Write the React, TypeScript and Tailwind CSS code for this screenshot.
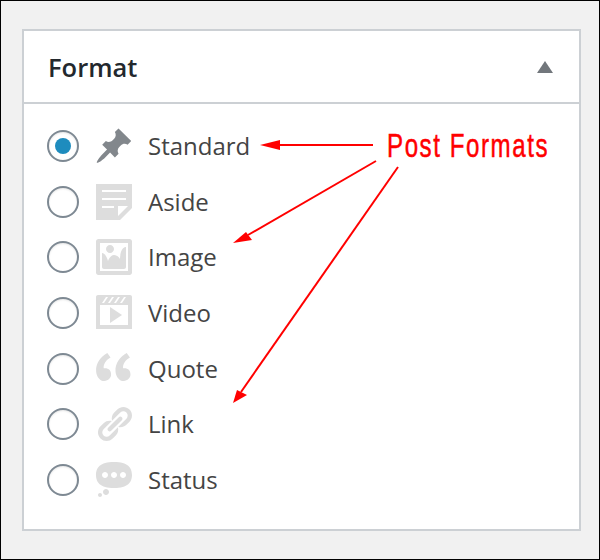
const ICONS: Record<string, string> = {
  Standard: 'M10.44 3.02l1.82-1.82 6.36 6.35-1.83 1.82c-1.05-.68-2.48-.57-3.41.36l-.75.75c-.92.93-1.04 2.35-.35 3.41l-1.83 1.82-2.41-2.41-2.8 2.79c-.42.42-3.38 2.71-3.8 2.29s1.86-3.39 2.28-3.81l2.79-2.79L4.1 9.36l1.83-1.82c1.05.69 2.48.57 3.4-.36l.75-.75c.93-.92 1.05-2.35.36-3.41z',
  Aside: 'M1 1h18v12l-6 6H1V1zm3 3v1h12V4H4zm0 4v1h12V8H4zm6 5v-1H4v1h6zm2 4l5-5h-5v5z',
  Image: 'M2.25 1h15.5c.69 0 1.25.56 1.25 1.25v15.5c0 .69-.56 1.25-1.25 1.25H2.25C1.56 19 1 18.44 1 17.75V2.25C1 1.56 1.56 1 2.25 1zM17 17V3H3v14h14zM10 6c0-1.1-.9-2-2-2s-2 .9-2 2 .9 2 2 2 2-.9 2-2zm3 5s0-6 3-6v10c0 .55-.45 1-1 1H5c-.55 0-1-.45-1-1V8c2 0 3 4 3 4s1-3 3-3 3 2 3 2z',
  Video: 'M2 1h16c.55 0 1 .45 1 1v16l-18-.02V2c0-.55.45-1 1-1zm4 1L4 5h1l2-3H6zm4 0H9L7 5h1zm3 0h-1l-2 3h1zm3 0h-1l-2 3h1zm1 14V6H3v10h14zM8 7l6 4-6 4V7z',
  Quote: 'M8.54 12.74c0-.87-.24-1.61-.72-2.22-.73-.92-2.14-1.03-2.96-.85-.34-1.93 1.3-4.39 3.42-5.45L6.65 2C3.45 3.6.71 7.3 1.07 11.2 1.27 13.96 3 16 5.14 16c1.01 0 1.83-.36 2.48-1.07.65-.71.92-1.28.92-2.19zm9.69 0c0-.87-.24-1.61-.72-2.22-.73-.92-2.14-1.03-2.96-.85-.34-1.93 1.3-4.39 3.42-5.45L16.34 2c-3.2 1.6-5.94 5.3-5.58 9.2.2 2.76 1.93 4.8 4.07 4.8 1.01 0 1.83-.36 2.48-1.07.65-.71.92-1.28.92-2.19z',
  Link: 'M17.74 2.76c1.68 1.69 1.68 4.41 0 6.1l-1.53 1.52c-1.12 1.12-2.7 1.47-4.14 1.09l2.62-2.61.76-.77.76-.76c.84-.84.84-2.2 0-3.04-.84-.85-2.2-.85-3.04 0l-.77.76-3.38 3.38c-.37-1.44-.02-3.02 1.1-4.14l1.52-1.53c1.69-1.68 4.42-1.68 6.1 0zM8.59 13.43l5.34-5.34c.42-.42.42-1.1 0-1.52-.44-.43-1.13-.39-1.53 0l-5.33 5.34c-.42.42-.42 1.1 0 1.52.44.43 1.13.39 1.52 0zm-.76 2.29l4.14-4.15c.38 1.44.03 3.02-1.09 4.14l-1.52 1.53c-1.69 1.68-4.41 1.68-6.1 0-1.68-1.68-1.68-4.42 0-6.1l1.53-1.52c1.12-1.12 2.7-1.47 4.14-1.1l-4.14 4.15c-.85.84-.85 2.2 0 3.05.84.84 2.2.84 3.04 0z',
  Status: 'M10 1c7 0 9 2.91 9 6.5S17 14 10 14s-9-2.91-9-6.5S3 1 10 1zM5.5 9C6.33 9 7 8.33 7 7.5S6.33 6 5.5 6 4 6.67 4 7.5 4.67 9 5.5 9zM10 9c.83 0 1.5-.67 1.5-1.5S10.83 6 10 6s-1.5.67-1.5 1.5S9.17 9 10 9zm4.5 0c.83 0 1.5-.67 1.5-1.5S15.33 6 14.5 6 13 6.67 13 7.5 13.67 9 14.5 9zM6 14.5c.83 0 1.5.67 1.5 1.5s-.67 1.5-1.5 1.5-1.5-.67-1.5-1.5.67-1.5 1.5-1.5zm-3 2c.55 0 1 .45 1 1s-.45 1-1 1-1-.45-1-1 .45-1 1-1z',
}

const FORMATS = ['Standard', 'Aside', 'Image', 'Video', 'Quote', 'Link', 'Status']

function FormatRow({ name }: { name: string }) {
  const checked = name === 'Standard'
  return (
    <div className="flex items-center h-[55.6px]">
      <span className="flex items-center justify-center w-8 h-8 rounded-full border-2 border-[#7e8993] bg-white shadow-[inset_0_1px_2px_rgba(0,0,0,0.1)]">
        {checked && <span className="w-4 h-4 rounded-full bg-[#1e8cbe]" />}
      </span>
      <svg viewBox="0 0 20 20" className={`ml-[15px] w-10 h-10 ${checked ? 'fill-[#82878c]' : 'fill-[#dddddd]'}`}>
        <path d={ICONS[name]} />
      </svg>
      <span className="ml-[14px] text-[24px] leading-none text-[#444444]">{name}</span>
    </div>
  )
}

export default function App() {
  return (
    <div className="relative w-[600px] h-[560px] bg-[#f1f1f1] border border-black pt-[28px] pl-[21px] pr-[18px] font-['Open_Sans',sans-serif]">
      {/* Meta box */}
      <div className="h-[502px] bg-white border-2 border-[#ccd0d4]">
        <div className="flex items-center justify-between h-[73px] pl-6 pr-[26px] border-b-2 border-[#ccd0d4]">
          <h2 className="text-[25.5px] leading-none font-semibold text-[#23282d] pt-[2px]">Format</h2>
          <svg viewBox="0 0 16 12" className="w-4 h-3 fill-[#72777c]">
            <path d="M8 0l8 12H0z" />
          </svg>
        </div>
        <div className="flex flex-col pt-[14.5px] pl-[23px]">
          {FORMATS.map(f => <FormatRow key={f} name={f} />)}
        </div>
      </div>

      {/* Annotation */}
      <span className="absolute left-[386px] top-[125px] origin-left scale-x-[0.72] tracking-[2.15px] text-[33.5px] leading-10 text-[#ff0000] whitespace-nowrap [-webkit-text-stroke:0.5px_#ff0000] font-['Liberation_Sans',sans-serif]">
        Post Formats
      </span>
      <svg className="absolute -left-px -top-px w-[600px] h-[560px] pointer-events-none" viewBox="0 0 600 560">
        <g stroke="#ff0000" strokeWidth="2" fill="none">
          <path d="M373 145H275" />
          <path d="M376 161L248 235" />
          <path d="M398 167L241 392" />
        </g>
        <g fill="#ff0000">
          <path d="M260 145l20-5v10z" />
          <path d="M233 243l13-11 6 8z" />
          <path d="M233 403l4-13 10 5z" />
        </g>
      </svg>
    </div>
  )
}
